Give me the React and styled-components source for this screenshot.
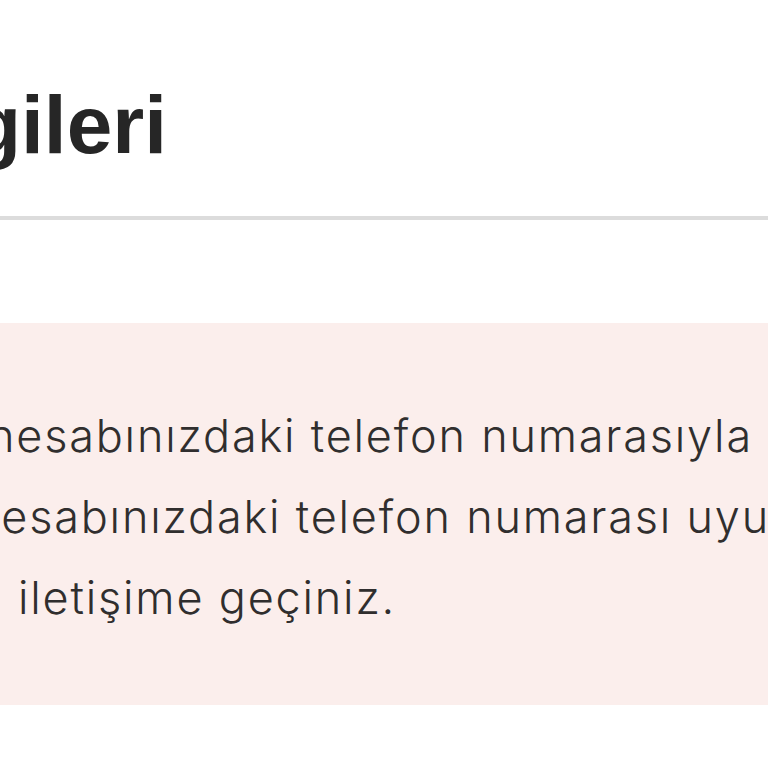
import React from 'react';
import styled, { createGlobalStyle } from 'styled-components';

const GlobalStyle = createGlobalStyle`
  html, body {
    margin: 0;
    padding: 0;
    background: #ffffff;
    overflow: hidden;
  }
`;

const Page = styled.div`
  width: 768px;
  height: 768px;
  overflow: hidden;
  background: #ffffff;
  font-family: "Liberation Sans", Arial, Helvetica, sans-serif;
`;

const Header = styled.header`
  padding-top: 84px;
  height: 132px;
  border-bottom: 4px solid #dcdcdc;
`;

const Title = styled.h1`
  margin: 0 0 0 -29px;
  font-size: 82px;
  line-height: 82px;
  font-weight: 700;
  color: #262626;
  white-space: nowrap;
`;

const Content = styled.section`
  padding-top: 103px;
`;

const Notice = styled.div`
  background: #fbeeec;
  padding: 72px 0 67px;
  overflow: hidden;
`;

const Line = styled.p`
  margin: 0 0 0 ${p => p.$shift}px;
  font-family: Inter, "Liberation Sans", sans-serif;
  font-size: 45px;
  line-height: 81px;
  font-weight: 300;
  letter-spacing: 1.8px;
  color: #302e2e;
  white-space: nowrap;
`;

const lines = [
  { shift: -12, text: 'hesabınızdaki telefon numarasıyla kayıtlı' },
  { shift: -27, text: 'hesabınızdaki telefon numarası uyuşmuyorsa' },
  { shift: 18, text: 'iletişime geçiniz.' },
];

export default function App() {
  return (
    <>
      <GlobalStyle />
      <Page>
        <Header>
          <Title>gileri</Title>
        </Header>
        <Content>
          <Notice>
            {lines.map((l, i) => (
              <Line key={i} $shift={l.shift}>{l.text}</Line>
            ))}
          </Notice>
        </Content>
      </Page>
    </>
  );
}
